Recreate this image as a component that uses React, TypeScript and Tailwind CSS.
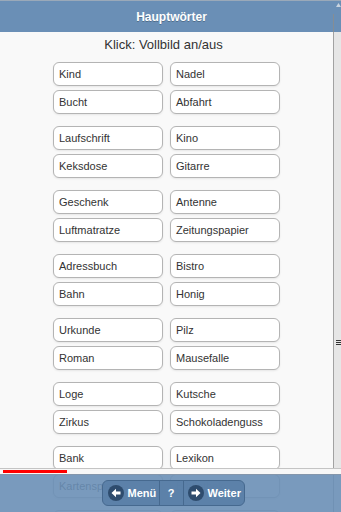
import React from "react";

const groups: [string, string][][] = [
  [["Kind", "Nadel"], ["Bucht", "Abfahrt"]],
  [["Laufschrift", "Kino"], ["Keksdose", "Gitarre"]],
  [["Geschenk", "Antenne"], ["Luftmatratze", "Zeitungspapier"]],
  [["Adressbuch", "Bistro"], ["Bahn", "Honig"]],
  [["Urkunde", "Pilz"], ["Roman", "Mausefalle"]],
  [["Loge", "Kutsche"], ["Zirkus", "Schokoladenguss"]],
  [["Bank", "Lexikon"], ["Kartenspiel", "Bibliothek"]],
  [["Schlüssel", "Zucker"], ["Brille", "Fenster"]],
];

function Word({ text }: { text: string }) {
  return (
    <div className="w-[110px] h-[24px] flex items-center pl-[5px] bg-white border border-[#b4b4b4] rounded-[6px] shadow-[0_1px_2px_rgba(0,0,0,0.08)] text-[11px] text-[#333]">
      {text}
    </div>
  );
}

function CircleArrow({ dir }: { dir: "left" | "right" }) {
  return (
    <svg width="16" height="16" viewBox="0 0 16 16">
      <circle cx="8" cy="8" r="8" fill="#2e4c6e" />
      {dir === "left" ? (
        <path d="M3.5 8 L8 3.8 L8 6.4 L12.5 6.4 L12.5 9.6 L8 9.6 L8 12.2 Z" fill="#fff" />
      ) : (
        <path d="M12.5 8 L8 3.8 L8 6.4 L3.5 6.4 L3.5 9.6 L8 9.6 L8 12.2 Z" fill="#fff" />
      )}
    </svg>
  );
}

export default function App() {
  return (
    <div
      className="relative w-[341px] h-[512px] overflow-hidden bg-[#f9f9f9]"
      style={{ fontFamily: '"Liberation Sans", Arial, sans-serif' }}
    >
      <div className="h-[32px] bg-[#6a8fb6] border-t border-[#9aa9b9] flex items-center justify-center pl-[2px]">
        <span className="text-white font-bold text-[12px] [text-shadow:0_1px_0_rgba(0,0,0,0.25)]">Hauptwörter</span>
      </div>
      <div className="w-[333px] flex flex-col items-center">
        <div className="h-[25px] flex items-center justify-center text-[13px] text-[#333] pr-[6px]">
          Klick: Vollbild an/aus
        </div>
        <div className="mt-[5px] flex flex-col gap-[12px]">
          {groups.map((g, i) => (
            <div key={i} className="flex flex-col gap-[4px]">
              {g.map((row, j) => (
                <div key={j} className="flex gap-[7px]">
                  <Word text={row[0]} />
                  <Word text={row[1]} />
                </div>
              ))}
            </div>
          ))}
        </div>
      </div>

      {/* scrollbar overlay */}
      <div className="absolute left-[333px] top-[14px] bottom-0 w-[1px] bg-[#8c8c8c]/80" />
      <div className="absolute left-[334px] top-[32px] h-[436px] w-[7px] bg-[#e6e6e6]" />
      <div className="absolute left-[336px] top-[340px] w-[5px] flex flex-col gap-[1px]">
        <div className="h-[1px] bg-[#333]" />
        <div className="h-[1px] bg-[#333]" />
        <div className="h-[1px] bg-[#333]" />
      </div>
      <svg className="absolute left-[336px] top-[3px]" width="5" height="4" viewBox="0 0 5 4">
        <path d="M0 4 L2.5 0 L5 4 Z" fill="#c9d4e0" />
      </svg>

      {/* footer */}
      <div className="absolute left-0 right-0 bottom-0 h-[44px] flex flex-col">
        <div className="relative h-[6px] bg-[#f7f7f7] border-t border-[#c4c4c4]">
          <div className="absolute left-[3px] top-[1px] w-[64px] h-[3px] bg-[#ff0000]" />
        </div>
        <div className="flex-1 bg-[#6a8fb6]/90 border-t border-[#8496ab] flex justify-center pt-[5px] pl-[5px]">
          <div className="h-[26px] flex rounded-[6px] border border-[#46698f] bg-[#5b80a8]/95 text-white font-bold text-[11px]">
            <div className="w-[56px] flex items-center gap-[4px] pl-[5px]">
              <CircleArrow dir="left" />
              <span>Menü</span>
            </div>
            <div className="w-[24px] flex items-center justify-center border-l border-[#46698f]">?</div>
            <div className="w-[61px] flex items-center gap-[4px] pl-[4px] border-l border-[#46698f]">
              <CircleArrow dir="right" />
              <span>Weiter</span>
            </div>
          </div>
        </div>
      </div>
    </div>
  );
}
